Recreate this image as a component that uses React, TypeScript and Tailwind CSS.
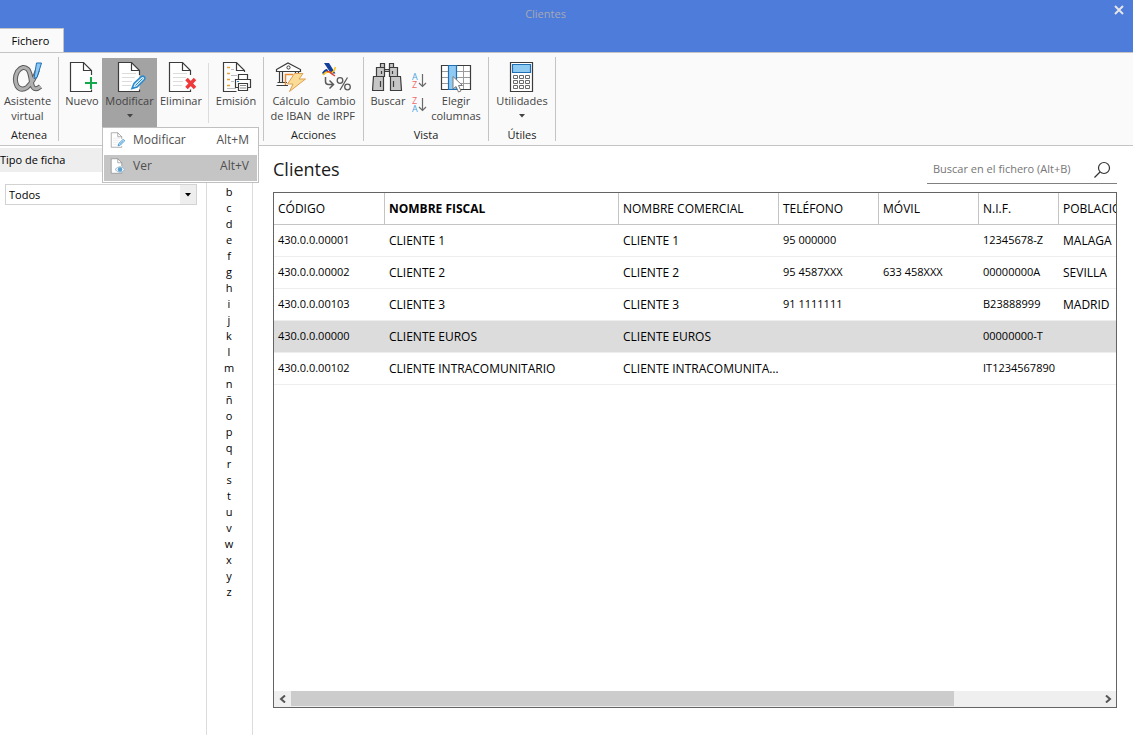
import React from 'react';
import clsx from 'clsx';

const DocShape = ({ lines = true, to = 14, color = '#3c3c3c' }: any) => (
  <>
    <path d="M4.5 1.5H17.5L25.5 9.5V30.5H4.5Z" fill="#fff" />
    {lines && (
      <path d="M8 12.5H22M8 16.5H21M8 20.5H18M8 24.5H17" stroke="#dcdcdc" />
    )}
    <path d={`M25.5 ${to}V9.5L17.5 1.5H4.5V30.5H25.5V28.5`} fill="none" stroke={color} strokeWidth="1.2" />
    <path d="M17.5 1.5V9.5H25.5" fill="none" stroke={color} strokeWidth="1.2" />
  </>
);

const Svg = ({ children, className = 'size-8' }: any) => (
  <svg viewBox="0 0 32 32" className={clsx('shrink-0', className)} fill="none" aria-hidden="true">
    {children}
  </svg>
);

const alphaCurve = 'M25.5 9Q22 20 15 26.500Q9 30.500 5 25Q1.500 18 5.500 10.500Q11 3.500 16 8.500Q18.500 12 19.500 21.500Q21 31.500 28.500 25.500';

const AlphaIcon = () => (
  <Svg>
    <path d={alphaCurve} stroke="#5c5c5c" strokeWidth="5" />
    <path d={alphaCurve} stroke="#b0b0b0" strokeWidth="3" />
    <path d="M24.500 2H29.500L25 16.500L22 17.500Z" fill="#8cc8f4" stroke="#1f6fb5" />
  </Svg>
);

const NewIcon = () => (
  <Svg>
    <DocShape lines={false} />
    <path d="M25 16V28M19 22H31" stroke="#fafafa" strokeWidth="5" />
    <path d="M25 16V28M19 22H31" stroke="#12a84b" strokeWidth="2" />
  </Svg>
);

const EditIcon = ({ className = 'size-8', color = '#3c3c3c' }: any) => (
  <Svg className={className}>
    <DocShape color={color} />
    <path d="M18 27.5L20 22.5L27.5 15.5Q29 14.500 30.500 16Q31.500 17.500 30.300 18.700L23 26Z" fill="#d9edf9" stroke="#2a8acb" strokeWidth="1.6" />
    <path d="M21.500 24.500L28.500 17.500" stroke="#2a8acb" />
  </Svg>
);

const ViewIcon = () => (
  <Svg className="size-4">
    <DocShape lines={false} color="#7c7c7c" to={16} />
    <path d="M12 23Q22 12 32 23Q22 34 12 23Z" fill="#eef5fa" stroke="#9fb8ca" strokeWidth="2" />
    <circle cx="22" cy="23" r="4.500" fill="#5a9fd0" />
  </Svg>
);

const DeleteIcon = () => (
  <Svg>
    <DocShape />
    <path d="M21.500 18L30 27M30 18L21.500 27" stroke="#fff" strokeWidth="5" />
    <path d="M21.500 18L30 27M30 18L21.500 27" stroke="#ee3a3a" strokeWidth="3.500" />
  </Svg>
);

const PrintIcon = () => (
  <Svg>
    <path d="M3.500 1.500H16.500L24.500 9.500V30.500H3.500Z" fill="#fff" />
    <path d="M24.500 11V9.500L16.500 1.500H3.500V30.500H16.500M16.500 1.500V9.500H24.500" stroke="#3c3c3c" strokeWidth="1.200" />
    <path d="M7 6.500H10M7 12.500H10M7 18.500H10M7 24.500H10" stroke="#e9a23b" strokeWidth="1.400" />
    <path d="M11 8.500H14M11 14.500H17M11 20.500H14M7 27.500H16" stroke="#bdbdbd" />
    <path d="M18.500 18.500V13.500H27.500V18.500M18.500 26.500H15.500V18.500H30.500V26.500H27.500" fill="#fff" stroke="#3c3c3c" strokeWidth="1.200" />
    <path d="M18.500 22.500H27.500V29.500H18.500Z" fill="#fff" stroke="#3c3c3c" strokeWidth="1.200" />
    <path d="M20 24.500H26M20 27H26" stroke="#8a8a8a" />
    <path d="M17 20.500H19" stroke="#2a8acb" />
  </Svg>
);

const BankIcon = () => (
  <Svg>
    <path d="M1.500 8.500L13 2L25.500 8.500V10.500H1.500Z" fill="#fff" stroke="#3c3c3c" strokeWidth="1.200" />
    <circle cx="13.500" cy="6.500" r="1.600" stroke="#3c3c3c" />
    <path d="M4.500 11V21M7.500 11V21M20.500 11V14M23.500 11V14" stroke="#3c3c3c" strokeWidth="1.200" />
    <path d="M2.500 21.500H12M1.500 24.500H13" stroke="#3c3c3c" strokeWidth="1.200" />
    <path d="M10.500 24V13.500H18" stroke="#ef8b32" strokeWidth="1.400" />
    <path d="M19.500 12.500H28L24 18H30.500L14.500 30.500L18 23H12.500Z" fill="#fbdc96" stroke="#dea052" />
  </Svg>
);

const TaxIcon = () => (
  <Svg>
    <path d="M4 2H9L15.500 12.500H11Z" fill="#123f9b" />
    <path d="M2 12Q4.500 8 7 8L9 11Q5 10.500 4 14Z" fill="#123f9b" />
    <path d="M3 14Q7 9 11 12Q14 11 15.500 6" stroke="#f8c51c" strokeWidth="1.600" />
    <path d="M7 10.500Q10 10 12 13L15 15" stroke="#e23a30" strokeWidth="1.400" />
    <path d="M5.500 16V20.500Q5.500 23.500 8.500 23.500H13M9.500 19.500L13.500 23.500L9.500 27.500" stroke="#5a5a5a" strokeWidth="1.500" />
    <circle cx="20" cy="19.500" r="2.800" stroke="#5a5a5a" strokeWidth="1.300" />
    <circle cx="27.500" cy="26" r="2.800" stroke="#5a5a5a" strokeWidth="1.300" />
    <path d="M27.500 16.500L20 29" stroke="#5a5a5a" strokeWidth="1.300" />
  </Svg>
);

const BinocularsIcon = () => (
  <Svg>
    <g fill="#c6c6c6" stroke="#3c3c3c" strokeWidth="1.200">
      <path d="M8.500 2.500H12.500V6.500H8.500ZM17.500 2.500H21.500V6.500H17.500Z" />
      <path d="M12.500 8.500H17.500V10.500H12.500Z" />
      <path d="M4.500 6.500H12.500V15.500H4.500ZM17.500 6.500H25.500V15.500H17.500Z" />
      <path d="M1.500 15.500H11.500V29.500H0.500ZM18.500 15.500H28.500L29.500 29.500H18.500Z" />
      <path d="M9.500 10V13M20.500 10V13M8.500 20V26M21.500 20V26" />
    </g>
  </Svg>
);

const SortIcon = ({ first, second }: { first: string; second: string }) => (
  <svg viewBox="0 0 16 16" className="size-4 overflow-visible" aria-hidden="true">
    <text x="0" y="7" fontFamily="Open Sans" fontSize="9" fill={first === 'A' ? '#4ba3dd' : '#ee6a6a'}>{first}</text>
    <text x="0" y="15" fontFamily="Open Sans" fontSize="9" fill={second === 'A' ? '#4ba3dd' : '#ee6a6a'}>{second}</text>
    <path d="M10.500 1V13.500M7 10L10.500 13.500L14 10" fill="none" stroke="#6a6a6a" strokeWidth="1.200" />
  </svg>
);

const ColumnsIcon = () => (
  <Svg>
    <path d="M1.500 4.500H30.500V28.500H1.500Z" fill="#fff" />
    <path d="M1.500 10.500H30.500M1.500 16.500H30.500M1.500 22.500H30.500M8.500 4.500V28.500M16.500 4.500V28.500M23.500 4.500V28.500" stroke="#9c9c9c" />
    <path d="M1.500 4.500H30.500V28.500H1.500Z" stroke="#3c3c3c" strokeWidth="1.200" />
    <path d="M8.500 4.500H16.500V28.500H8.500Z" fill="#8fcaf3" stroke="#1f6fb5" strokeWidth="1.200" />
    <path d="M13 15.500V28L16 25.500L18.500 31L21 30L18.500 24.500H22.500Z" fill="#fff" stroke="#7a7a7a" />
  </Svg>
);

const CalculatorIcon = () => (
  <Svg>
    <path d="M4.500 1.500H26.500V30.500H4.500Z" fill="#fff" stroke="#3c3c3c" strokeWidth="1.200" />
    <path d="M6.500 3.500H24.500V11.500H6.500Z" fill="#8fcaf3" stroke="#1f6fb5" strokeWidth="1.200" />
    <path d="M7.500 14.500h4v3h-4zM13.500 14.500h4v3h-4zM19.500 14.500h4v3h-4zM7.500 19.500h4v3h-4zM13.500 19.500h4v3h-4zM19.500 19.500h4v3h-4zM7.500 24.500h4v3h-4zM13.500 24.500h4v3h-4zM19.500 24.500h4v3h-4z" stroke="#6a6a6a" />
  </Svg>
);

const Caret = ({ className }: any) => (
  <svg viewBox="0 0 6 4" className={clsx('h-1 w-1.5', className)} aria-hidden="true">
    <path d="M0 0H6L3 3.500Z" fill="currentColor" />
  </svg>
);

const RibbonButton = ({ icon: Icon, label, second, caret, active, className }: any) => (
  <button
    type="button"
    className={clsx('mt-px flex h-[69px] flex-col items-center pt-[3px] text-[11px] leading-[15px] text-[#444444]', active && 'bg-[#a3a3a3]', className)}
  >
    <Icon />
    <span className="whitespace-nowrap">{label}</span>
    {second && <span className="whitespace-nowrap">{second}</span>}
    {caret && <Caret className="mt-1.5" />}
  </button>
);

const RibbonGroup = ({ title, className, children }: any) => (
  <section className={clsx('flex h-[84px] flex-col border-r border-[#c4c4c4]', className)}>
    <div className="flex">{children}</div>
    {title && <h2 className="mt-auto text-center text-[11px] leading-3 text-[#1a1a1a]">{title}</h2>}
  </section>
);

const columns = [
  { title: 'CÓDIGO', width: 'w-[111px]', numeric: true },
  { title: 'NOMBRE FISCAL', width: 'w-[234px]', sorted: true },
  { title: 'NOMBRE COMERCIAL', width: 'w-[160px]' },
  { title: 'TELÉFONO', width: 'w-[100px]', numeric: true },
  { title: 'MÓVIL', width: 'w-[100px]', numeric: true },
  { title: 'N.I.F.', width: 'w-[80px]', numeric: true },
  { title: 'POBLACIÓN', width: '' },
];

const rows = [
  ['430.0.0.00001', 'CLIENTE 1', 'CLIENTE 1', '95 000000', '', '12345678-Z', 'MALAGA'],
  ['430.0.0.00002', 'CLIENTE 2', 'CLIENTE 2', '95 4587XXX', '633 458XXX', '00000000A', 'SEVILLA'],
  ['430.0.0.00103', 'CLIENTE 3', 'CLIENTE 3', '91 1111111', '', 'B23888999', 'MADRID'],
  ['430.0.0.00000', 'CLIENTE EUROS', 'CLIENTE EUROS', '', '', '00000000-T', ''],
  ['430.0.0.00102', 'CLIENTE INTRACOMUNITARIO', 'CLIENTE INTRACOMUNITARIO', '', '', 'IT1234567890', ''],
];

const selectedRow = 3;
const letters = 'bcdefghijklmnñopqrstuvwxyz'.split('');

const TitleBar = () => (
  <header className="flex h-[52px] items-end bg-[#4d7cdb]">
    <button type="button" className="h-6 w-16 border-t border-r border-[#c4c4c4] bg-[#fafafa] pt-0.5 pr-0.5 text-center text-[11px] text-black">
      Fichero
    </button>
    <h1 className="flex-1 self-start pt-1.5 pr-[87px] text-center text-[11px] leading-4 text-[#a6a9b3]">Clientes</h1>
    <button type="button" aria-label="Cerrar" className="mt-[5px] mr-[9px] self-start">
      <svg viewBox="0 0 10 10" className="size-2.5">
        <path d="M1 1L9 9M9 1L1 9" stroke="#e6e6e6" strokeWidth="2" />
      </svg>
    </button>
  </header>
);

const ModifyMenu = () => (
  <ul role="menu" className="absolute top-[70px] left-0 z-10 w-[157px] border border-[#c0c0c0] bg-white p-px text-xs text-[#4f4f4f]">
    <li>
      <button type="button" role="menuitem" className="flex h-[26px] w-full items-center pr-2 pb-1 pl-[5px]">
        <EditIcon className="size-4" color="#7c7c7c" />
        <span className="ml-2">Modificar</span>
        <span className="ml-auto">Alt+M</span>
      </button>
    </li>
    <li>
      <button type="button" role="menuitem" className="flex h-[26px] w-full items-center bg-[#c5c5c5] pr-2 pb-1 pl-[5px]">
        <ViewIcon />
        <span className="ml-2">Ver</span>
        <span className="ml-auto">Alt+V</span>
      </button>
    </li>
  </ul>
);

const Ribbon = () => (
  <nav className="flex h-[94px] border-y border-[#c4c4c4] bg-[#fafafa] pt-1">
    <RibbonGroup title="Atenea" className="w-[59px]">
      <RibbonButton icon={AlphaIcon} label="Asistente" second="virtual" className="w-[55px]" />
    </RibbonGroup>
    <RibbonGroup className="w-[205px] pl-[3px]">
      <RibbonButton icon={NewIcon} label="Nuevo" className="w-10" />
      <div className="relative">
        <RibbonButton icon={EditIcon} label="Modificar" caret active className="w-[55px]" />
        <ModifyMenu />
      </div>
      <RibbonButton icon={DeleteIcon} label="Eliminar" className="w-12" />
      <div className="mt-1.5 ml-[3px] h-[60px] border-r border-[#dcdcdc]" />
      <RibbonButton icon={PrintIcon} label="Emisión" className="w-[54px]" />
    </RibbonGroup>
    <RibbonGroup title="Acciones" className="w-[100px]">
      <RibbonButton icon={BankIcon} label="Cálculo" second="de IBAN" className="ml-1 w-[46px]" />
      <RibbonButton icon={TaxIcon} label="Cambio" second="de IRPF" className="w-11" />
    </RibbonGroup>
    <RibbonGroup title="Vista" className="w-[125px]">
      <RibbonButton icon={BinocularsIcon} label="Buscar" className="w-12" />
      <div className="flex w-4 flex-col gap-2 pt-4">
        <button type="button" aria-label="Orden ascendente">
          <SortIcon first="A" second="Z" />
        </button>
        <button type="button" aria-label="Orden descendente">
          <SortIcon first="Z" second="A" />
        </button>
      </div>
      <RibbonButton icon={ColumnsIcon} label="Elegir" second="columnas" className="w-14" />
    </RibbonGroup>
    <RibbonGroup title="Útiles" className="w-[67px]">
      <RibbonButton icon={CalculatorIcon} label="Utilidades" caret className="w-full" />
    </RibbonGroup>
  </nav>
);

const FilterPanel = () => (
  <aside className="w-[207px] shrink-0 border-r border-[#dcdcdc] pt-0.5">
    <label htmlFor="tipo" className="block h-6 bg-[#eeeeee] text-[11px] leading-6 text-black">Tipo de ficha</label>
    <div className="relative mt-3 mr-[9px] ml-[5px]">
      <select id="tipo" className="block h-[21px] w-full appearance-none border border-[#d2d2d2] bg-white pt-px pl-[3px] text-[11px] text-black">
        <option>Todos</option>
      </select>
      <span className="pointer-events-none absolute inset-y-px right-px flex w-4 items-center justify-center bg-[#eeeeee]">
        <Caret />
      </span>
    </div>
  </aside>
);

const ClientTable = () => (
  <div className="flex flex-1 flex-col overflow-hidden border border-[#646464]">
    <table className="w-full table-fixed border-separate border-spacing-0 text-left text-xs text-black">
      <thead>
        <tr className="h-8">
          {columns.map((col) => (
            <th
              key={col.title}
              className={clsx('overflow-hidden border-r border-b border-[#c4c4c4] py-0 pr-0 pl-1 whitespace-nowrap last:border-r-0', col.sorted ? 'font-bold' : 'font-normal', col.width)}
            >
              {col.title}
            </th>
          ))}
        </tr>
      </thead>
      <tbody>
        {rows.map((row, idx) => (
          <tr key={row[0]} className={clsx('h-8', idx === selectedRow && 'bg-[#dcdcdc]')}>
            {row.map((cell, i) => (
              <td key={i} className={clsx('truncate border-b border-[#eeeeee] py-0 pr-0 pl-1', columns[i].numeric && 'text-[11px]')}>{cell}</td>
            ))}
          </tr>
        ))}
      </tbody>
    </table>
    <div className="mt-auto flex h-4 bg-[#efefef]">
      <button type="button" aria-label="Desplazar a la izquierda" className="flex w-[17px] items-center justify-center">
        <svg viewBox="0 0 8 8" className="size-2"><path d="M6 0.500L2 4L6 7.500" fill="none" stroke="#555" strokeWidth="2" /></svg>
      </button>
      <div className="flex-1">
        <div className="h-[15px] w-[82%] bg-[#cccccc]" />
      </div>
      <button type="button" aria-label="Desplazar a la derecha" className="flex w-[17px] items-center justify-center">
        <svg viewBox="0 0 8 8" className="size-2"><path d="M2 0.500L6 4L2 7.500" fill="none" stroke="#555" strokeWidth="2" /></svg>
      </button>
    </div>
  </div>
);

export default function App() {
  return (
    <div className="flex h-screen flex-col bg-white font-['Open_Sans',sans-serif]">
      <TitleBar />
      <Ribbon />
      <div className="flex min-h-0 flex-1">
        <FilterPanel />
        <ul className="w-[46px] shrink-0 border-r border-[#dcdcdc] pt-[38px] pr-px text-center text-[11px] leading-4 text-black">
          {letters.map((letter) => (
            <li key={letter}>
              <button type="button" className="block w-full">{letter}</button>
            </li>
          ))}
        </ul>
        <main className="flex min-w-0 flex-1 flex-col pt-2 pr-4 pb-[27px] pl-5">
          <div className="flex h-[38px] items-start justify-between">
            <h2 className="text-lg leading-[30px] text-[#1a1a1a]">Clientes</h2>
            <div className="flex h-[30px] w-[190px] items-center border-b border-[#808080] pt-0.5 pr-1.5 pl-1.5">
              <input
                type="text"
                aria-label="Buscar en el fichero"
                placeholder="Buscar en el fichero (Alt+B)"
                className="min-w-0 flex-1 text-[11px] outline-none placeholder:text-[#767676]"
              />
              <svg viewBox="0 0 18 18" className="size-[18px] shrink-0" aria-hidden="true">
                <circle cx="11" cy="7" r="5.500" fill="none" stroke="#333" strokeWidth="1.200" />
                <path d="M7 11L1.500 16.500" stroke="#333" strokeWidth="1.200" />
              </svg>
            </div>
          </div>
          <ClientTable />
        </main>
      </div>
    </div>
  );
}
